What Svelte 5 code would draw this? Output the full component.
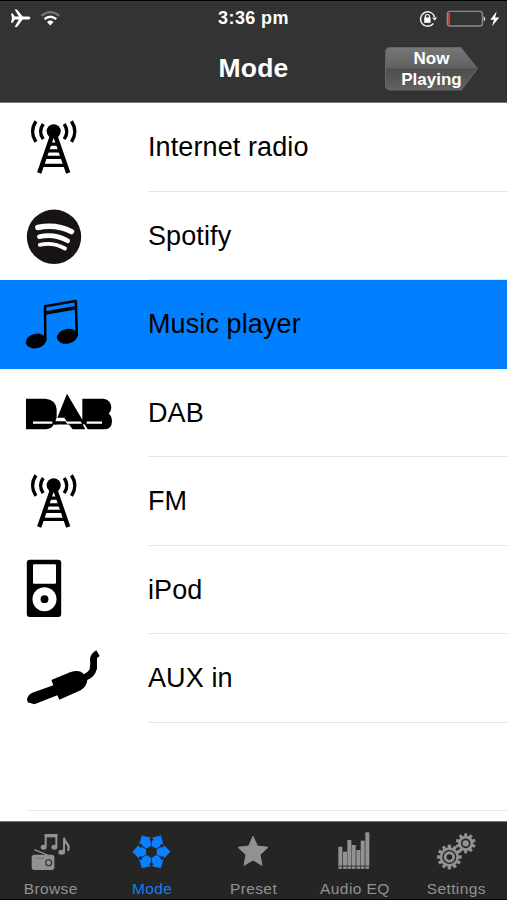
<script lang="ts">
	const rows = [
		{ id: 'antenna', label: 'Internet radio' },
		{ id: 'spotify', label: 'Spotify' },
		{ id: 'music', label: 'Music player' },
		{ id: 'dab', label: 'DAB' },
		{ id: 'antenna', label: 'FM' },
		{ id: 'ipod', label: 'iPod' },
		{ id: 'aux', label: 'AUX in' }
	];
	const tabs = ['Browse', 'Mode', 'Preset', 'Audio EQ', 'Settings'];
	const eqBars = [
		[331, 140], [345, 155], [358, 120], [371, 135], [385, 150], [398, 122], [412, 97]
	];
	const petals = [0, 60, 120, 180, 240, 300];
	const teeth = Array.from({ length: 12 }, (_, i) => i * 30);
	const smallTeeth = Array.from({ length: 10 }, (_, i) => i * 36);

	let selectedRow = $state(2);
	let activeTab = $state('Mode');
</script>

<div class="screen">
	<header>
		<div class="status-bar">
			<svg class="status-left" width="70" height="34" viewBox="0 0 70 34" fill="#fff">
				<path d="M11 12.5h1.7l2.2 3.1h4L14.6 8.5h2.4l5.7 7.1h6c2.2 0 2.2 3 0 3h-6L17 26h-2.4l4.3-7.4h-4l-2.2 3.1H11l1-4.6z" />
				<path d="M41.5 14.8Q50.3 7.5 59.2 14.8" fill="none" stroke="#777" stroke-width="2.3" />
				<path d="M44.5 18.2Q50.3 13.2 56.3 18.2" fill="none" stroke="#fff" stroke-width="2.4" />
				<path d="M47 21q3.3-2.8 6.6 0L50.3 24.5z" />
			</svg>
			<span class="time">3:36 pm</span>
			<svg class="status-right" width="97" height="34" viewBox="410 0 97 34" fill="none">
				<path d="M433.4 22.5A7.2 7.2 0 1 1 434.6 16" stroke="#eee" stroke-width="1.5" />
				<path d="M432 16.5h5.2l-2.5 3.2z" fill="#eee" />
				<rect x="424.2" y="16.5" width="6.4" height="5.3" fill="#fff" />
				<path d="M425.4 17v-1.5a2 2 0 0 1 4 0V17" stroke="#fff" stroke-width="1.2" />
				<rect x="447.4" y="10.4" width="35" height="14.6" rx="2.5" stroke="#8a8a8a" stroke-width="1.4" />
				<path d="M448.2 12h1.8v11.5h-1.8z" fill="#e33b36" />
				<path d="M483.6 15q3.4 2.8 0 5.6z" fill="#ddd" />
				<path d="M496.6 10.5L490.3 18.7H494L492 25.3L499.4 16.4H495.2z" fill="#fff" />
			</svg>
		</div>
		<div class="nav-bar">
			<h1>Mode</h1>
			<button class="now-playing" aria-label="Now Playing">
				<svg width="96" height="46" viewBox="0 0 96 46">
					<defs>
						<linearGradient id="shine" x2="0" y2="1">
							<stop offset="0" stop-color="#777" />
							<stop offset="0.49" stop-color="#606060" />
							<stop offset="0.5" stop-color="#4d4d4d" />
							<stop offset="1" stop-color="#626262" />
						</linearGradient>
					</defs>
					<path d="M6 1.5H77L93.5 22.5L77.5 44H6Q1.5 44 1.5 39.5V6Q1.5 1.5 6 1.5Z" fill="url(#shine)" stroke="#666" />
				</svg>
				<span>Now<br />Playing</span>
			</button>
		</div>
	</header>

	<main>
		{#each rows as row, i}
			<button class="row" class:selected={selectedRow === i} onclick={() => (selectedRow = i)}>
				<svg class="row-icon" width="148" height="88" viewBox="0 0 148 88">
					{#if row.id === 'antenna'}
						<circle cx="53.7" cy="28.3" r="7" />
						<g fill="none" stroke="#000">
							<path d="M52 33L39.2 70M55.4 33L68.2 70" stroke-width="4.4" />
							<path d="M50 41.2H57M48 47.8H60M45 54.4H63M42 62.3H66" stroke-width="3.2" />
							<path d="M35.9 18.2Q29.2 28.5 35.9 38.9M71.5 18.2Q78.2 28.5 71.5 38.9" stroke-width="3.4" />
							<path d="M43.2 21Q38 28.5 43.2 36.1M64.2 21Q69.4 28.5 64.2 36.1" stroke-width="3.4" />
						</g>
					{:else if row.id === 'spotify'}
						<circle cx="54" cy="44.8" r="27.2" fill="#181414" />
						<g fill="none" stroke="#fff" stroke-linecap="round">
							<path d="M37.8 35.5Q56 31.6 71.5 39.6" stroke-width="5.4" />
							<path d="M39.3 44.7Q54 41.3 67.7 48.8" stroke-width="4.6" />
							<path d="M39.8 52.8Q53 49.8 65 56.5" stroke-width="3.8" />
						</g>
					{:else if row.id === 'music'}
						<ellipse cx="36" cy="61" rx="10.3" ry="7.2" transform="rotate(-12 36 61)" />
						<ellipse cx="67.3" cy="56.3" rx="10.5" ry="7.3" transform="rotate(-12 67.3 56.3)" />
						<g fill="none" stroke="#000">
							<path d="M45.3 61L45 26.3L75.8 21L76.8 56" stroke-width="2.5" stroke-linejoin="round" />
							<path d="M45 33L76 27.8" stroke-width="3.4" />
						</g>
					{:else if row.id === 'dab'}
						<g transform="translate(20 19.5) scale(0.3333)">
							<path d="M18 31H76Q107 34 110 62V108H101Q94 122 78 122H18Z" />
							<path d="M141 16L187 94V31H251Q274 35 274 58Q274 68 266 75Q276 83 276 99Q275 122 255 122H203L194 108H190L196 122H158L147 108H104L112 88Z" />
							<path d="M39 99H97V106H39ZM106 98L110 88H133L140 99H182L186 106H141L136 98ZM200 99H246V106H200Z" fill="#fff" />
							<path d="M190 108L199 122" fill="none" stroke="#fff" stroke-width="4" />
						</g>
					{:else if row.id === 'ipod'}
						<rect x="26.8" y="13.8" width="34.4" height="57.3" rx="3" />
						<rect x="33" y="18.2" width="23" height="19.6" rx="1.2" fill="#fff" />
						<circle cx="44.5" cy="53.3" r="12" fill="#fff" />
						<circle cx="44.5" cy="53.2" r="3.9" />
					{:else}
						<path
							transform="translate(0 -4) scale(0.3333)"
							d="M81 208Q84 195 95 189L160 166L154 150L210 127Q240 117 251 133Q263 129 269 118Q272 104 270 86Q272 71 289 61L299 78L291 84V116Q284 141 262 150Q260 170 242 181L178 209L172 196L103 223L83 217Z"
						/>
					{/if}
				</svg>
				<span class="row-label">{row.label}</span>
			</button>
		{/each}
		<div class="empty-row"></div>
	</main>

	<nav class="tab-bar">
		{#each tabs as tab}
			<button class="tab" class:active={activeTab === tab} onclick={() => (activeTab = tab)}>
				<!-- Icon shapes use a 3x grid, one tab is 304 units wide -->
				{#if tab === 'Browse'}
					<svg viewBox="0 66 304 162">
						<g fill="none" stroke="currentColor">
							<path d="M137 139V105H169V139" stroke-width="6" />
							<path d="M134 107H172" stroke-width="10" />
							<path d="M192 157V113Q194 127 203 133Q208 140 204 153" stroke-width="6" />
							<path d="M194 120L207 141" stroke-width="6" />
							<path d="M103 149L145 166" stroke-width="4" />
						</g>
						<ellipse cx="131" cy="142" rx="9" ry="7.5" />
						<ellipse cx="163" cy="142" rx="9" ry="7.5" />
						<ellipse cx="185" cy="157" rx="10" ry="7.5" />
						<rect x="95" y="164" width="68" height="46" rx="8" />
						<circle cx="146" cy="188" r="9" stroke="#3a3a3a" stroke-width="4" />
						<path d="M104 175H132" stroke="#777" stroke-width="3" />
					</svg>
				{:else if tab === 'Mode'}
					<svg viewBox="0 66 304 162">
						{#each petals as angle}
							<path transform="translate(151 155.5) rotate({angle})" d="M57 0L37 -21V-14H27L16 -8V8L27 14H37V21Z" />
						{/each}
					</svg>
				{:else if tab === 'Preset'}
					<svg viewBox="0 66 304 162">
						<path d="M150 109L163 138L195 142L171 164L177 196L150 180L123 196L129 164L105 142L137 138Z" stroke="currentColor" stroke-width="3" stroke-linejoin="round" />
					</svg>
				{:else if tab === 'Audio EQ'}
					<svg viewBox="93 66 304 162">
						{#each eqBars as [x, y]}
							<rect x={x - 135} {y} width="12" height={197 - y} />
							<rect x={x - 135} y="199.5" width="11" height="7" />
						{/each}
					</svg>
				{:else}
					<svg viewBox="0 66 304 162">
						<g transform="translate(130 171)">
							{#each teeth as angle}
								<rect x="-5" y="-37" width="10" height="12" transform="rotate({angle})" />
							{/each}
							<circle r="29" />
							<circle r="19" fill="none" stroke="#252525" stroke-width="4" />
							<circle r="8.5" fill="#252525" />
						</g>
						<g transform="translate(179 130)">
							{#each smallTeeth as angle}
								<rect x="-4.5" y="-30" width="9" height="12" transform="rotate({angle})" />
							{/each}
							<circle r="23" />
							<circle r="12" fill="none" stroke="#252525" stroke-width="5" />
						</g>
					</svg>
				{/if}
				<span>{tab}</span>
			</button>
		{/each}
	</nav>
</div>

<style>
	:global(body) {
		background: #000;
	}

	.screen {
		display: flex;
		flex-direction: column;
		width: 507px;
		height: 900px;
		box-sizing: border-box;
		border-top: 1px solid #000;
		border-bottom: 1px solid #000;
		background: #fff;
		font-family: 'Liberation Sans', Arial, sans-serif;
		overflow: hidden;
	}

	button {
		padding: 0;
		border: 0;
		background: none;
		font: inherit;
		color: inherit;
	}

	svg {
		display: block;
	}

	header {
		height: 102px;
		box-sizing: border-box;
		flex-shrink: 0;
		border-bottom: 1px solid #777;
		background: #333;
		color: #fff;
	}

	.status-bar,
	.nav-bar {
		display: grid;
		grid-template-columns: 1fr auto 1fr;
		align-items: center;
	}

	.status-bar {
		height: 34px;
	}

	.status-left {
		margin-top: -1px;
	}

	.status-right {
		justify-self: end;
		margin-top: -1px;
	}

	.time {
		font-size: 18px;
		font-weight: bold;
		letter-spacing: 0.4px;
	}

	.nav-bar {
		height: 67px;
	}

	h1 {
		grid-column: 2;
		margin: 0;
		font-size: 26.5px;
		letter-spacing: 0.2px;
	}

	.now-playing {
		display: grid;
		justify-self: end;
		width: 96px;
		margin-right: 27px;
	}

	.now-playing > * {
		grid-area: 1 / 1;
	}

	.now-playing span {
		align-self: center;
		padding: 2px 1px 0 0;
		font-size: 17px;
		font-weight: bold;
		line-height: 20.5px;
		text-align: center;
	}

	main {
		flex: 1;
		min-height: 0;
	}

	.row {
		display: flex;
		width: 100%;
		height: 88.5px;
		text-align: left;
		color: #000;
	}

	.row-label {
		flex: 1;
		height: 100%;
		box-sizing: border-box;
		border-bottom: 1.5px solid #e4e4e4;
		font-size: 27px;
		line-height: 88px;
		letter-spacing: 0.1px;
	}

	.row.selected {
		background: #007fff;
	}

	.row.selected .row-label {
		border-color: transparent;
	}

	.empty-row {
		height: 88.5px;
		box-sizing: border-box;
		margin-left: 26px;
		border-bottom: 1px solid #e8e8e8;
	}

	.tab-bar {
		display: grid;
		grid-template-columns: repeat(5, 1fr);
		height: 78px;
		box-sizing: border-box;
		flex-shrink: 0;
		border-top: 1px solid #777;
		background: #252525;
	}

	.tab {
		display: flex;
		flex-direction: column;
		align-items: center;
		color: #929292;
	}

	.tab svg {
		width: 101.4px;
		height: 54px;
		fill: currentColor;
	}

	.tab span {
		margin-top: 4px;
		font-size: 15.5px;
		line-height: 18px;
		letter-spacing: 0.4px;
		white-space: nowrap;
	}

	.tab.active {
		color: #0a80ff;
	}
</style>
